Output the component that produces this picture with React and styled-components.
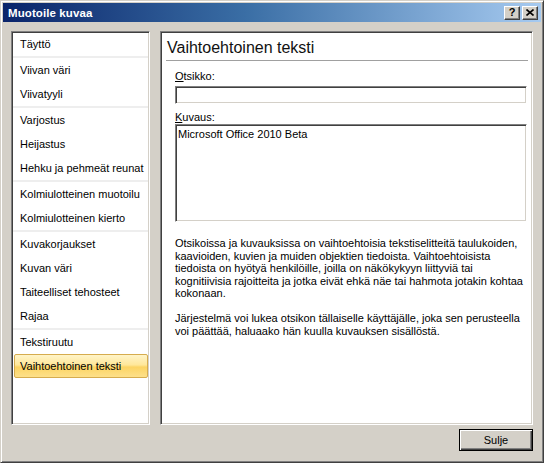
import React from "react";
import styled, { createGlobalStyle } from "styled-components";

const GlobalStyle = createGlobalStyle`
  html, body { margin: 0; padding: 0; background: #d4d0c8; }
  body {
    font-family: "Liberation Sans", Arial, sans-serif;
    font-size: 11px;
    color: #000;
  }
  * { box-sizing: border-box; }
`;

const Window = styled.div`
  width: 544px;
  height: 463px;
  background: #d4d0c8;
  border: 1px solid;
  border-color: #d4d0c8 #404040 #404040 #d4d0c8;
  box-shadow: inset 1px 1px 0 #ffffff, inset -1px -1px 0 #808080;
  padding: 2px;
  display: flex;
  flex-direction: column;
`;

const TitleBar = styled.div`
  height: 19px;
  flex: none;
  display: flex;
  align-items: center;
  padding: 0 3px 0 5px;
  background: linear-gradient(to right, #0a246a 0%, #3a6ea5 45%, #a6caf0 100%);
`;

const TitleText = styled.div`
  color: #fff;
  font-weight: bold;
  font-size: 11.5px;
  letter-spacing: 0.1px;
`;

const TitleButtons = styled.div`
  margin-left: auto;
  display: flex;
  gap: 2px;
`;

const TitleButton = styled.div`
  width: 16px;
  height: 14px;
  background: #d4d0c8;
  border: 1px solid;
  border-color: #ffffff #404040 #404040 #ffffff;
  box-shadow: inset -1px -1px 0 #808080;
  display: flex;
  align-items: center;
  justify-content: center;
  font-weight: bold;
  font-size: 11px;
  line-height: 1;
  color: #000;
`;

const Body = styled.div`
  flex: 1;
  display: flex;
  flex-direction: column;
  padding: 9px 8px 9px 8px;
`;

const Main = styled.div`
  height: 394px;
  display: flex;
  gap: 10px;
`;

const Sunken = styled.div`
  background: #fff;
  border: 1px solid;
  border-color: #808080 #ffffff #ffffff #808080;
  box-shadow: inset 1px 1px 0 #404040, inset -1px -1px 0 #d4d0c8;
`;

const ListPanel = styled(Sunken)`
  width: 139px;
  flex: none;
  padding: 0 1px 1px 1px;
  display: flex;
  flex-direction: column;
`;

const Item = styled.div`
  height: 24px;
  flex: none;
  display: flex;
  align-items: center;
  padding-left: 7px;
  white-space: nowrap;
  ${(p) =>
    p.$selected &&
    `
    margin-left: 1px;
    padding-left: 5px;
    border: 1px solid #d6ac4e;
    border-radius: 2px;
    background: linear-gradient(to bottom, #fff4c8 0%, #ffe79a 45%, #fcd463 55%, #fde08a 100%);
  `}
`;

const Separator = styled.div`
  height: 2px;
  flex: none;
  background: #eeeeee;
`;

const ContentPanel = styled(Sunken)`
  flex: 1;
  padding: 1px;
  display: flex;
  flex-direction: column;
`;

const Header = styled.div`
  margin: 0 3px 0 4px;
  padding: 5px 0 2px 1px;
  font-size: 16px;
  line-height: 20px;
  border-bottom: 1px solid #a0a0a0;
  color: #111;
`;

const Form = styled.div`
  padding: 9px 4px 0 13px;
  display: flex;
  flex-direction: column;
`;

const Label = styled.div`
  line-height: 13px;
  margin-top: ${(p) => p.$top || 0}px;
  margin-bottom: ${(p) => (p.$bottom === undefined ? 3 : p.$bottom)}px;
  u { text-decoration: underline; }
`;

const Field = styled(Sunken)`
  height: ${(p) => p.$h}px;
  padding: 3px 2px;
  line-height: 13px;
`;

const Help = styled.div`
  margin-top: 15px;
  line-height: 12.5px;
`;

const Line = styled.div`
  white-space: nowrap;
  min-height: 12.5px;
`;

const Footer = styled.div`
  margin-top: 4px;
  display: flex;
  justify-content: flex-end;
`;

const Button = styled.button`
  width: 74px;
  height: 22px;
  padding: 0;
  font-family: "Liberation Sans", Arial, sans-serif;
  font-size: 11px;
  color: #000;
  background: #d4d0c8;
  border: 1px solid #000;
  box-shadow: inset 1px 1px 0 #ffffff, inset -1px -1px 0 #404040, inset -2px -2px 0 #808080;
`;

const sections = [
  ["Täyttö"],
  ["Viivan väri", "Viivatyyli"],
  ["Varjostus", "Heijastus", "Hehku ja pehmeät reunat"],
  ["Kolmiulotteinen muotoilu", "Kolmiulotteinen kierto"],
  ["Kuvakorjaukset", "Kuvan väri", "Taiteelliset tehosteet", "Rajaa"],
  ["Tekstiruutu", "Vaihtoehtoinen teksti"],
];

const helpLines = [
  "Otsikoissa ja kuvauksissa on vaihtoehtoisia tekstiselitteitä taulukoiden,",
  "kaavioiden, kuvien ja muiden objektien tiedoista. Vaihtoehtoisista",
  "tiedoista on hyötyä henkilöille, joilla on näkökykyyn liittyviä tai",
  "kognitiivisia rajoitteita ja jotka eivät ehkä näe tai hahmota jotakin kohtaa",
  "kokonaan.",
  "",
  "Järjestelmä voi lukea otsikon tällaiselle käyttäjälle, joka sen perusteella",
  "voi päättää, haluaako hän kuulla kuvauksen sisällöstä.",
];

export default function App() {
  return (
    <>
      <GlobalStyle />
      <Window>
        <TitleBar>
          <TitleText>Muotoile kuvaa</TitleText>
          <TitleButtons>
            <TitleButton>?</TitleButton>
            <TitleButton>
              <svg width="8" height="7" viewBox="0 0 8 7">
                <path d="M0.5 0.5 L7.5 6.5 M7.5 0.5 L0.5 6.5" stroke="#000" strokeWidth="1.6" />
              </svg>
            </TitleButton>
          </TitleButtons>
        </TitleBar>
        <Body>
          <Main>
            <ListPanel>
              {sections.map((group, gi) => (
                <React.Fragment key={gi}>
                  {gi > 0 && <Separator />}
                  {group.map((name) => (
                    <Item key={name} $selected={name === "Vaihtoehtoinen teksti"}>
                      {name}
                    </Item>
                  ))}
                </React.Fragment>
              ))}
            </ListPanel>
            <ContentPanel>
              <Header>Vaihtoehtoinen teksti</Header>
              <Form>
                <Label>
                  <u>O</u>tsikko:
                </Label>
                <Field $h={18} />
                <Label $top={7} $bottom={0}>
                  <u>K</u>uvaus:
                </Label>
                <Field $h={98}>Microsoft Office 2010 Beta</Field>
                <Help>
                  {helpLines.map((l, i) => (
                    <Line key={i}>{l}</Line>
                  ))}
                </Help>
              </Form>
            </ContentPanel>
          </Main>
          <Footer>
            <Button>Sulje</Button>
          </Footer>
        </Body>
      </Window>
    </>
  );
}
